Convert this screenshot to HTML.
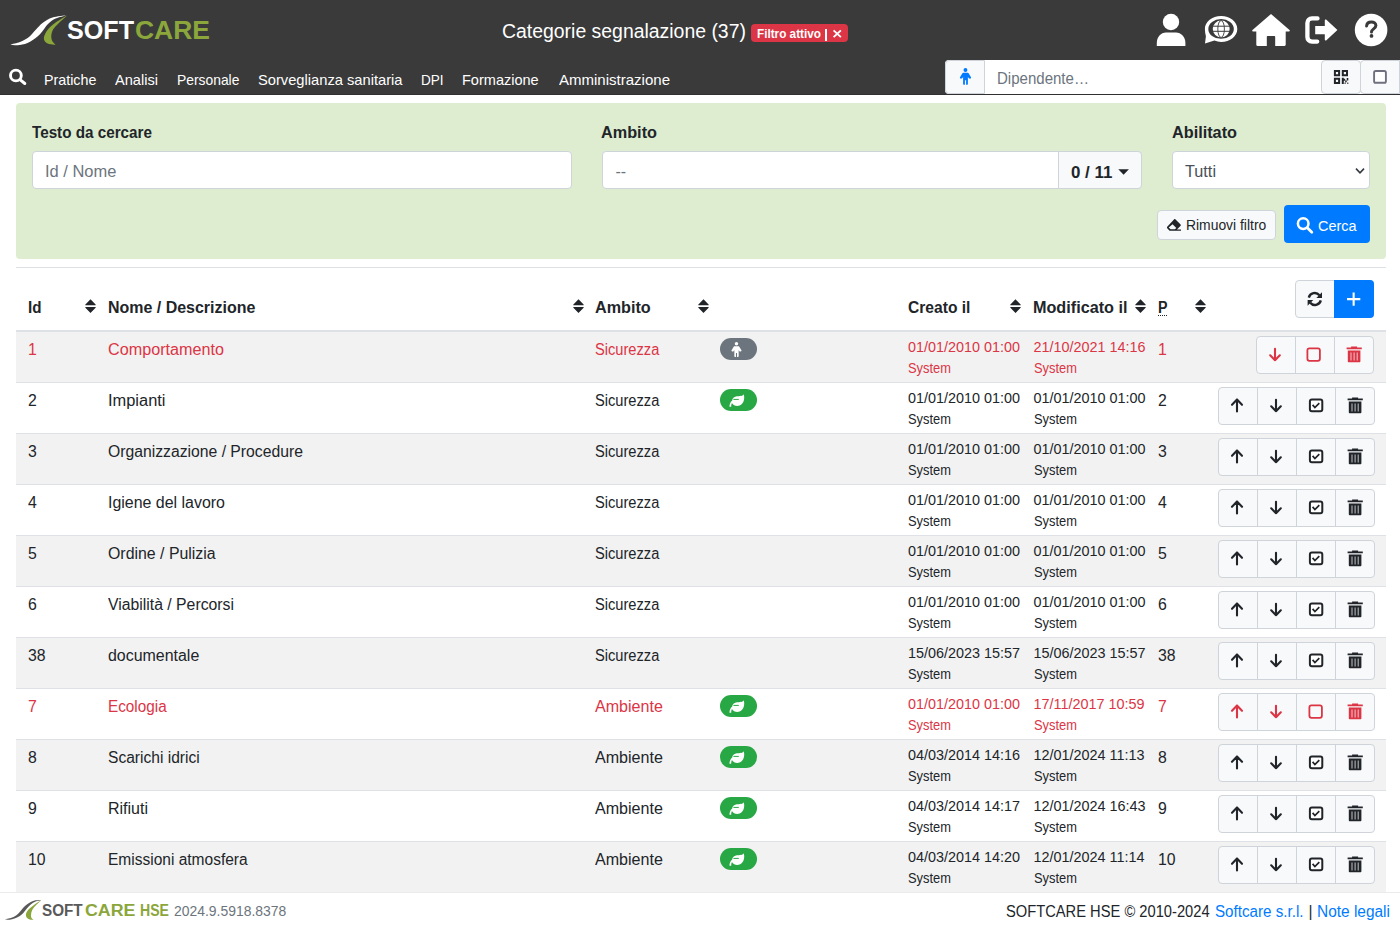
<!DOCTYPE html>
<html><head><meta charset="utf-8"><title>Categorie segnalazione</title>
<style>
html,body{margin:0;padding:0;width:1400px;height:927px;overflow:hidden;background:#fff;}
body{position:relative;font-family:"Liberation Sans", sans-serif;}
.t{position:absolute;white-space:nowrap;line-height:1;}
svg{overflow:visible;}
</style></head><body>
<div style="position:absolute;left:0px;top:0px;width:1400px;height:95px;background:#3a3a3a;"></div>
<div style="position:absolute;left:0px;top:94px;width:1400px;height:1px;background:#303030;"></div>
<svg style="position:absolute;left:0px;top:0px;" width="80" height="60" viewBox="0 0 80 60"><path d="M10.50 44.50 C12.08 44.08 16.92 43.25 20.00 42.00 C23.08 40.75 26.33 39.08 29.00 37.00 C31.67 34.92 33.75 31.83 36.00 29.50 C38.25 27.17 39.75 25.00 42.50 23.00 C45.25 21.00 48.42 18.79 52.50 17.50 C56.58 16.21 64.58 15.62 67.00 15.25 L67.00 15.25 C65.00 15.83 58.25 17.21 55.00 18.75 C51.75 20.29 49.50 22.54 47.50 24.50 C45.50 26.46 44.67 28.50 43.00 30.50 C41.33 32.50 40.08 34.42 37.50 36.50 C34.92 38.58 30.83 41.54 27.50 43.00 C24.17 44.46 20.33 45.00 17.50 45.25 C14.67 45.50 11.67 44.62 10.50 44.50 Z" fill="#fff"/><path d="M67.00 15.50 C65.00 16.75 58.25 20.58 55.00 23.00 C51.75 25.42 49.33 27.67 47.50 30.00 C45.67 32.33 44.42 35.08 44.00 37.00 C43.58 38.92 44.17 40.33 45.00 41.50 C45.83 42.67 47.25 43.46 49.00 44.00 C50.75 44.54 54.42 44.62 55.50 44.75 L55.50 44.75 C54.92 44.04 52.67 42.29 52.00 40.50 C51.33 38.71 51.00 36.25 51.50 34.00 C52.00 31.75 52.42 30.08 55.00 27.00 C57.58 23.92 65.00 17.42 67.00 15.50 Z" fill="#8ba63b"/></svg>
<div class="t" style="left:67.4px;top:18.41px;font-size:25.5px;color:#fff;font-weight:700;transform:scaleX(0.9853);transform-origin:0 0;">SOFT</div>
<div class="t" style="left:135.4px;top:18.41px;font-size:25.5px;color:#8ba63b;font-weight:700;transform:scaleX(1.0380);transform-origin:0 0;">CARE</div>
<div class="t" style="left:502.4px;top:22.01px;font-size:19.6px;color:#fff;transform:scaleX(0.9909);transform-origin:0 0;">Categorie segnalazione (37)</div>
<div style="position:absolute;left:751px;top:24px;width:97px;height:18px;background:#dc3545;border-radius:4px;"></div>
<div class="t" style="left:756.8px;top:27.90px;font-size:12.4px;color:#fff;font-weight:700;transform:scaleX(0.9480);transform-origin:0 0;">Filtro attivo</div>
<div style="position:absolute;left:825.4px;top:29.3px;width:1.3px;height:11.3px;background:#fff;"></div>
<svg style="position:absolute;left:830px;top:27px;" width="14" height="14" viewBox="830 27 14 14"><path d="M833.6 30.4 L840.9 37.1 M840.9 30.4 L833.6 37.1" stroke="#fff" stroke-width="1.9"/></svg>
<svg style="position:absolute;left:1150px;top:8px;" width="45" height="44" viewBox="1150 8 45 44"><circle cx="1171" cy="22" r="8.2" fill="#fff"/><path d="M1156.8 45.9 L1156.8 43 C1156.8 37 1161 32.6 1166 32.6 L1176 32.6 C1181 32.6 1185.4 37 1185.4 43 L1185.4 45.9 Z" fill="#fff"/></svg>
<svg style="position:absolute;left:1195px;top:8px;" width="50" height="44" viewBox="1195 8 50 44"><path d="M1205 43.6 L1205.9 36.2 C1205.3 33.9 1204.9 31.5 1204.9 28.9 C1204.9 21.7 1212.1 15.9 1221.1 15.9 C1230.1 15.9 1237.3 21.7 1237.3 28.9 C1237.3 36.1 1230.1 41.9 1221.1 41.9 C1218.8 41.9 1216.5 41.5 1214.4 40.6 Z" fill="#fff"/><ellipse cx="1221.05" cy="28.9" rx="12.75" ry="9.9" fill="#3a3a3a"/><circle cx="1221.2" cy="29" r="8.45" fill="#fff"/><path d="M1212.5 26.2 H1230 M1212.5 31.3 H1230" stroke="#3a3a3a" stroke-width="1"/><ellipse cx="1221.1" cy="29" rx="3.3" ry="8.45" fill="none" stroke="#3a3a3a" stroke-width="0.9"/></svg>
<svg style="position:absolute;left:1245px;top:8px;" width="50" height="44" viewBox="1245 8 50 44"><path d="M1271 13.9 L1289.5 30 C1290.2 30.8 1289.6 31.5 1288.6 31.5 L1285.7 31.5 L1285.7 44.8 C1285.7 45.5 1285.2 46 1284.5 46 L1275.2 46 L1275.2 37 C1275.2 36.3 1274.7 36 1274.2 36 L1267.8 36 C1267.3 36 1266.8 36.3 1266.8 37 L1266.8 46 L1257.5 46 C1256.8 46 1256.3 45.5 1256.3 44.8 L1256.3 31.5 L1253.4 31.5 C1252.4 31.5 1251.8 30.8 1252.5 30 Z" fill="#fff"/></svg>
<svg style="position:absolute;left:1300px;top:8px;" width="45" height="44" viewBox="1300 8 45 44"><path d="M1317.5 18.4 H1312 C1309.3 18.4 1307.4 20.3 1307.4 23 V37 C1307.4 39.7 1309.3 41.6 1312 41.6 H1317.2" fill="none" stroke="#fff" stroke-width="4.3" stroke-linecap="round"/><path d="M1315.2 26 H1324.8 V20.5 C1324.8 19.6 1325.8 19.2 1326.4 19.8 L1337.4 30 L1326.4 40.2 C1325.8 40.8 1324.8 40.4 1324.8 39.5 V34.3 H1315.2 Z" fill="#fff"/></svg>
<svg style="position:absolute;left:1350px;top:8px;" width="45" height="44" viewBox="1350 8 45 44"><circle cx="1371.1" cy="30" r="16.3" fill="#fff"/><path d="M1366.6 26 C1366.8 23.3 1368.8 21.9 1371.4 21.9 C1374 21.9 1375.9 23.5 1375.9 25.6 C1375.9 28.8 1371.5 29 1371.5 32" fill="none" stroke="#3a3a3a" stroke-width="3" stroke-linecap="round"/><circle cx="1371.5" cy="35.9" r="1.9" fill="#3a3a3a"/></svg>
<svg style="position:absolute;left:0px;top:60px;" width="35" height="35" viewBox="0 60 35 35"><circle cx="15.9" cy="75.5" r="5.4" fill="none" stroke="#fff" stroke-width="2.9"/><path d="M20 79.6 L24.8 83.5" stroke="#fff" stroke-width="3" stroke-linecap="round"/></svg>
<div class="t" style="left:44.2px;top:72.30px;font-size:15px;color:#fff;transform:scaleX(0.9522);transform-origin:0 0;">Pratiche</div>
<div class="t" style="left:115.3px;top:72.30px;font-size:15px;color:#fff;transform:scaleX(0.9731);transform-origin:0 0;">Analisi</div>
<div class="t" style="left:177.3px;top:72.30px;font-size:15px;color:#fff;transform:scaleX(0.9238);transform-origin:0 0;">Personale</div>
<div class="t" style="left:257.9px;top:72.30px;font-size:15px;color:#fff;transform:scaleX(0.9791);transform-origin:0 0;">Sorveglianza sanitaria</div>
<div class="t" style="left:421.3px;top:72.30px;font-size:15px;color:#fff;transform:scaleX(0.9038);transform-origin:0 0;">DPI</div>
<div class="t" style="left:462.4px;top:72.30px;font-size:15px;color:#fff;transform:scaleX(0.9684);transform-origin:0 0;">Formazione</div>
<div class="t" style="left:558.6px;top:72.30px;font-size:15px;color:#fff;transform:scaleX(1.0012);transform-origin:0 0;">Amministrazione</div>
<div style="position:absolute;left:945px;top:60px;width:455px;height:34px;background:#fff;border-radius:4px 0 0 4px;"></div>
<div style="position:absolute;left:945px;top:60px;width:39.5px;height:34px;background:#f8f9fa;border:1px solid #ced4da;border-radius:4px 0 0 4px;box-sizing:border-box;"></div>
<svg style="position:absolute;left:959.5px;top:68.3px;" width="12" height="17" viewBox="0 0 12 17"><g fill="#007bff"><circle cx="5.46" cy="2.0" r="1.95"/><path d="M3.3 4.7 H7.7 C8.1 4.7 8.4 4.9 8.6 5.2 L11 9.3 C11.3 9.9 10.9 10.6 10.2 10.6 H9 L7.9 8.9 V16 C7.9 16.4 7.6 16.7 7.2 16.7 H6.1 V12.2 H4.9 V16.7 H3.8 C3.4 16.7 3.1 16.4 3.1 16 V8.9 L2 10.6 H0.8 C0.1 10.6 -0.3 9.9 0 9.3 L2.4 5.2 C2.6 4.9 2.9 4.7 3.3 4.7 Z"/></g></svg>
<div class="t" style="left:997px;top:70.09px;font-size:16.2px;color:#6c757d;transform:scaleX(0.9286);transform-origin:0 0;">Dipendente…</div>
<div style="position:absolute;left:1320.5px;top:60px;width:40px;height:34px;background:#f8f9fa;border:1px solid #ced4da;border-radius:4px;box-sizing:border-box;"></div>
<div style="position:absolute;left:1360px;top:60px;width:40px;height:34px;background:#f8f9fa;border:1px solid #ced4da;border-radius:4px 0 0 4px;box-sizing:border-box;"></div>
<svg style="position:absolute;left:1330px;top:66px;" width="22" height="22" viewBox="1330 66 22 22"><path d="M1334.9 71 h4.2 v4.2 h-4.2 Z M1342.8 71 h4.2 v4.2 h-4.2 Z M1334.9 78.8 h4.2 v4.2 h-4.2 Z" fill="none" stroke="#212529" stroke-width="2"/><path d="M1341.8 77.8 h2 v6.2 h-2 Z M1343.8 78.8 h1.4 v2 h-1.4 Z M1345.2 80.4 h1.5 v1.8 h-1.5 Z M1346.7 78 h1.6 v2.4 h-1.6 Z M1344.6 82.6 h1 v1.3 h-1 Z M1347.3 82.6 h1 v1.3 h-1 Z" fill="#212529"/></svg>
<svg style="position:absolute;left:1370px;top:66px;" width="22" height="22" viewBox="1370 66 22 22"><rect x="1374.1" y="71" width="11.8" height="11.8" rx="1.6" fill="#fff" stroke="#6f6f80" stroke-width="1.9"/></svg>
<div style="position:absolute;left:16px;top:103px;width:1370px;height:155.5px;background:#deedcf;border-radius:4px;"></div>
<div class="t" style="left:32px;top:124.79px;font-size:15.6px;color:#212529;font-weight:700;transform:scaleX(0.9768);transform-origin:0 0;">Testo da cercare</div>
<div class="t" style="left:601.4px;top:125.29px;font-size:15.6px;color:#212529;font-weight:700;transform:scaleX(1.0423);transform-origin:0 0;">Ambito</div>
<div class="t" style="left:1171.7px;top:125.29px;font-size:15.6px;color:#212529;font-weight:700;transform:scaleX(1.0418);transform-origin:0 0;">Abilitato</div>
<div style="position:absolute;left:32px;top:151px;width:540px;height:38px;background:#fff;border:1px solid #ced4da;border-radius:4px;box-sizing:border-box;"></div>
<div class="t" style="left:45px;top:163.86px;font-size:16.0px;color:#6c757d;transform:scaleX(1.0294);transform-origin:0 0;">Id / Nome</div>
<div style="position:absolute;left:602px;top:151px;width:540px;height:38px;background:#fff;border:1px solid #ced4da;border-radius:4px;box-sizing:border-box;"></div>
<div style="position:absolute;left:1058px;top:151px;width:83.5px;height:38px;background:#f8f9fa;border:1px solid #ced4da;border-radius:0 4px 4px 0;box-sizing:border-box;"></div>
<div class="t" style="left:615.4px;top:163.56px;font-size:16px;color:#6c757d;">--</div>
<div class="t" style="left:1070.7px;top:163.89px;font-size:16.2px;color:#212529;font-weight:700;transform:scaleX(1.0444);transform-origin:0 0;">0 / 11</div>
<svg style="position:absolute;left:1115px;top:165px;" width="18" height="14" viewBox="1115 165 18 14"><path d="M1118.3 169.3 H1128.9 L1123.6 174.7 Z" fill="#212529"/></svg>
<div style="position:absolute;left:1172px;top:151px;width:198px;height:38px;background:#fff;border:1px solid #ced4da;border-radius:4px;box-sizing:border-box;"></div>
<div class="t" style="left:1185.4px;top:163.86px;font-size:16.0px;color:#495057;transform:scaleX(1.0156);transform-origin:0 0;">Tutti</div>
<svg style="position:absolute;left:1350px;top:162px;" width="20" height="18" viewBox="1350 162 20 18"><path d="M1356 168.6 L1360 172.8 L1364 168.6" fill="none" stroke="#343a40" stroke-width="1.6"/></svg>
<div style="position:absolute;left:1157px;top:209.5px;width:119px;height:30.5px;background:#f8f9fa;border:1px solid #ced4da;border-radius:4px;box-sizing:border-box;"></div>
<svg style="position:absolute;left:1163px;top:214px;" width="22" height="22" viewBox="1163 214 22 22"><path d="M1175.3 219.2 L1180.6 224.4 C1181 224.8 1181 225.4 1180.6 225.8 L1177 229.4 H1181 V230.8 H1170.3 C1169.9 230.8 1169.6 230.6 1169.3 230.4 L1167.2 228.3 C1166.8 227.9 1166.8 227.2 1167.2 226.8 L1174.2 219.2 C1174.5 218.9 1175 218.9 1175.3 219.2 Z" fill="#212529"/><path d="M1172.6 224.3 L1176.3 227.9 L1174.8 229.3 H1170.6 L1168.7 227.5 Z" fill="#f8f9fa"/></svg>
<div class="t" style="left:1186.3px;top:217.98px;font-size:14.2px;color:#212529;transform:scaleX(0.9785);transform-origin:0 0;">Rimuovi filtro</div>
<div style="position:absolute;left:1284px;top:205px;width:86px;height:38px;background:#007bff;border-radius:4px;"></div>
<svg style="position:absolute;left:1292px;top:212px;" width="25" height="25" viewBox="1292 212 25 25"><circle cx="1303.2" cy="223.6" r="5.3" fill="none" stroke="#fff" stroke-width="2.5"/><path d="M1307.3 227.7 L1311.8 232.2" stroke="#fff" stroke-width="2.8" stroke-linecap="round"/></svg>
<div class="t" style="left:1317.7px;top:217.96px;font-size:15.4px;color:#fff;transform:scaleX(0.9372);transform-origin:0 0;">Cerca</div>
<div style="position:absolute;left:16px;top:267px;width:1370px;height:1px;background:#dee2e6;"></div>
<div class="t" style="left:28.4px;top:299.49px;font-size:16.2px;color:#212529;font-weight:700;transform:scaleX(0.9377);transform-origin:0 0;">Id</div>
<svg style="position:absolute;left:85.2px;top:299px;" width="11" height="14.3" viewBox="0 0 11 14.3"><path d="M5.5 0.3 L10.6 5.6 C10.9 6 10.7 6.3 10.3 6.3 H0.7 C0.3 6.3 0.1 6 0.4 5.6 Z M5.5 14 L10.6 8.7 C10.9 8.3 10.7 8 10.3 8 H0.7 C0.3 8 0.1 8.3 0.4 8.7 Z" fill="#212529"/></svg>
<div class="t" style="left:108.2px;top:299.66px;font-size:16.0px;color:#212529;font-weight:700;transform:scaleX(0.9980);transform-origin:0 0;">Nome / Descrizione</div>
<svg style="position:absolute;left:572.9px;top:299px;" width="11" height="14.3" viewBox="0 0 11 14.3"><path d="M5.5 0.3 L10.6 5.6 C10.9 6 10.7 6.3 10.3 6.3 H0.7 C0.3 6.3 0.1 6 0.4 5.6 Z M5.5 14 L10.6 8.7 C10.9 8.3 10.7 8 10.3 8 H0.7 C0.3 8 0.1 8.3 0.4 8.7 Z" fill="#212529"/></svg>
<div class="t" style="left:595px;top:299.66px;font-size:16.0px;color:#212529;font-weight:700;transform:scaleX(1.0108);transform-origin:0 0;">Ambito</div>
<svg style="position:absolute;left:697.9px;top:299px;" width="11" height="14.3" viewBox="0 0 11 14.3"><path d="M5.5 0.3 L10.6 5.6 C10.9 6 10.7 6.3 10.3 6.3 H0.7 C0.3 6.3 0.1 6 0.4 5.6 Z M5.5 14 L10.6 8.7 C10.9 8.3 10.7 8 10.3 8 H0.7 C0.3 8 0.1 8.3 0.4 8.7 Z" fill="#212529"/></svg>
<div class="t" style="left:907.6px;top:299.66px;font-size:16.0px;color:#212529;font-weight:700;transform:scaleX(0.9748);transform-origin:0 0;">Creato il</div>
<svg style="position:absolute;left:1010px;top:299px;" width="11" height="14.3" viewBox="0 0 11 14.3"><path d="M5.5 0.3 L10.6 5.6 C10.9 6 10.7 6.3 10.3 6.3 H0.7 C0.3 6.3 0.1 6 0.4 5.6 Z M5.5 14 L10.6 8.7 C10.9 8.3 10.7 8 10.3 8 H0.7 C0.3 8 0.1 8.3 0.4 8.7 Z" fill="#212529"/></svg>
<div class="t" style="left:1033.3px;top:299.66px;font-size:16.0px;color:#212529;font-weight:700;transform:scaleX(1.0115);transform-origin:0 0;">Modificato il</div>
<svg style="position:absolute;left:1135px;top:299px;" width="11" height="14.3" viewBox="0 0 11 14.3"><path d="M5.5 0.3 L10.6 5.6 C10.9 6 10.7 6.3 10.3 6.3 H0.7 C0.3 6.3 0.1 6 0.4 5.6 Z M5.5 14 L10.6 8.7 C10.9 8.3 10.7 8 10.3 8 H0.7 C0.3 8 0.1 8.3 0.4 8.7 Z" fill="#212529"/></svg>
<div class="t" style="left:1157.9px;top:299.66px;font-size:16.0px;color:#212529;font-weight:700;transform:scaleX(0.8901);transform-origin:0 0;">P</div>
<div style="position:absolute;left:1158px;top:314.5px;width:9.5px;height:1px;background:repeating-linear-gradient(90deg,#212529 0 1px,transparent 1px 2px);"></div>
<svg style="position:absolute;left:1194.8px;top:299px;" width="11" height="14.3" viewBox="0 0 11 14.3"><path d="M5.5 0.3 L10.6 5.6 C10.9 6 10.7 6.3 10.3 6.3 H0.7 C0.3 6.3 0.1 6 0.4 5.6 Z M5.5 14 L10.6 8.7 C10.9 8.3 10.7 8 10.3 8 H0.7 C0.3 8 0.1 8.3 0.4 8.7 Z" fill="#212529"/></svg>
<div style="position:absolute;left:1295px;top:280px;width:79px;height:38px;background:#f8f9fa;border:1px solid #ced4da;border-radius:4px;box-sizing:border-box;"></div>
<div style="position:absolute;left:1334px;top:280px;width:40px;height:38px;background:#007bff;border-radius:0 4px 4px 0;"></div>
<svg style="position:absolute;left:1304px;top:289px;" width="22" height="20" viewBox="1304 289 22 20"><path d="M1308.8 297.6 A6.1 6.1 0 0 1 1319.4 295.2" fill="none" stroke="#212529" stroke-width="2.4"/><path d="M1322 292.2 V297.9 H1316.3 Z" fill="#212529"/><path d="M1320.8 300.4 A6.1 6.1 0 0 1 1310.2 302.8" fill="none" stroke="#212529" stroke-width="2.4"/><path d="M1307.6 305.8 V300.1 H1313.3 Z" fill="#212529"/></svg>
<svg style="position:absolute;left:1340px;top:286px;" width="28" height="26" viewBox="1340 286 28 26"><path d="M1353.65 292.5 V305.8 M1347 299.15 H1360.3" stroke="#fff" stroke-width="2.1"/></svg>
<div style="position:absolute;left:16px;top:330px;width:1370px;height:2px;background:#dee2e6;"></div>
<div style="position:absolute;left:16px;top:332px;width:1370px;height:50px;background:#f2f2f2;"></div>
<div class="t" style="left:28.4px;top:341.79px;font-size:15.6px;color:#dc3545;transform:scaleX(1.0128);transform-origin:0 0;">1</div>
<div class="t" style="left:107.8px;top:341.79px;font-size:15.6px;color:#dc3545;transform:scaleX(1.0371);transform-origin:0 0;">Comportamento</div>
<div class="t" style="left:595.2px;top:341.63px;font-size:15.8px;color:#dc3545;transform:scaleX(0.9269);transform-origin:0 0;">Sicurezza</div>
<div style="position:absolute;left:720px;top:338px;width:37px;height:22px;background:#6c757d;border-radius:11px;"></div>
<svg style="position:absolute;left:731.4px;top:342.4px;overflow:visible;" width="11" height="15" viewBox="0 0 11 16.7"><g fill="#fff"><circle cx="5.46" cy="2.0" r="1.95"/><path d="M3.3 4.7 H7.7 C8.1 4.7 8.4 4.9 8.6 5.2 L11 9.3 C11.3 9.9 10.9 10.6 10.2 10.6 H9 L7.9 8.9 V16 C7.9 16.4 7.6 16.7 7.2 16.7 H6.1 V12.2 H4.9 V16.7 H3.8 C3.4 16.7 3.1 16.4 3.1 16 V8.9 L2 10.6 H0.8 C0.1 10.6 -0.3 9.9 0 9.3 L2.4 5.2 C2.6 4.9 2.9 4.7 3.3 4.7 Z"/></g></svg>
<div class="t" style="left:908px;top:339.81px;font-size:14.4px;color:#dc3545;">01/01/2010 01:00</div>
<div class="t" style="left:908px;top:360.81px;font-size:14.4px;color:#dc3545;transform:scaleX(0.8956);transform-origin:0 0;">System</div>
<div class="t" style="left:1033.5px;top:339.81px;font-size:14.4px;color:#dc3545;">21/10/2021 14:16</div>
<div class="t" style="left:1033.5px;top:360.81px;font-size:14.4px;color:#dc3545;transform:scaleX(0.8956);transform-origin:0 0;">System</div>
<div class="t" style="left:1158px;top:341.93px;font-size:15.8px;color:#dc3545;">1</div>
<div style="position:absolute;left:1256px;top:336px;width:118px;height:38px;background:#f8f9fa;border:1px solid #ced4da;border-radius:4px;box-sizing:border-box;"></div>
<div style="position:absolute;left:1295px;top:336px;width:1px;height:38px;background:#ced4da;"></div>
<div style="position:absolute;left:1334px;top:336px;width:1px;height:38px;background:#ced4da;"></div>
<svg style="position:absolute;left:1256.0px;top:336px;" width="39" height="38" viewBox="0 0 39 38"><path d="M19 12.7 V24.3 M14.2 19.3 L19 24.2 L23.8 19.3" fill="none" stroke="#dc3545" stroke-width="2.1" stroke-linecap="round" stroke-linejoin="round"/></svg>
<svg style="position:absolute;left:1295.3333333333333px;top:336px;" width="39" height="38" viewBox="0 0 39 38"><rect x="12.4" y="12.3" width="12.5" height="12.5" rx="2" fill="none" stroke="#dc3545" stroke-width="1.8"/></svg>
<svg style="position:absolute;left:1334.6666666666667px;top:336px;" width="39" height="38" viewBox="0 0 39 38"><path d="M11.6 11.4 H26.8 V13.3 H11.6 Z M16.1 10.4 H22.1 V11.6 H16.1 Z" fill="#dc3545"/><path d="M12.8 14.5 H25.4 V25.2 C25.4 25.8 24.9 26.3 24.3 26.3 H13.9 C13.3 26.3 12.8 25.8 12.8 25.2 Z" fill="#dc3545"/><path d="M16 16.5 V24.5 M19.1 16.5 V24.5 M22.2 16.5 V24.5" stroke="#f8f9fa" stroke-width="1" opacity="0.75"/></svg>
<div style="position:absolute;left:16px;top:382px;width:1370px;height:1px;background:#dee2e6;"></div>
<div class="t" style="left:28.4px;top:392.79px;font-size:15.6px;color:#212529;transform:scaleX(1.0128);transform-origin:0 0;">2</div>
<div class="t" style="left:107.8px;top:392.79px;font-size:15.6px;color:#212529;transform:scaleX(1.0526);transform-origin:0 0;">Impianti</div>
<div class="t" style="left:595.2px;top:392.63px;font-size:15.8px;color:#212529;transform:scaleX(0.9269);transform-origin:0 0;">Sicurezza</div>
<div style="position:absolute;left:720px;top:389px;width:37px;height:22px;background:#28a745;border-radius:11px;"></div>
<svg style="position:absolute;left:720px;top:389px;" width="37" height="22" viewBox="0 0 37 22"><path d="M23.7 5.2 C24.3 7 24.4 9 24 10.5 C23.4 14.5 20.5 16.9 17.3 16.9 C15 16.9 13 15.8 11.9 13.9 C11.4 15 11.1 16.4 11.2 17.8 L9.5 17.8 C9.4 15.5 10.3 13.3 12.2 11.6 C12.3 10.6 12.6 10 12.9 9.6 C14 8 15.5 7.3 17 7.2 C19.5 7.1 21 7 21.9 6.7 C22.7 6.4 23.3 5.9 23.7 5.2 Z" fill="#fff"/><path d="M13.4 10.4 H18.8" stroke="#28a745" stroke-width="1"/></svg>
<div class="t" style="left:908px;top:390.81px;font-size:14.4px;color:#212529;">01/01/2010 01:00</div>
<div class="t" style="left:908px;top:411.81px;font-size:14.4px;color:#212529;transform:scaleX(0.8956);transform-origin:0 0;">System</div>
<div class="t" style="left:1033.5px;top:390.81px;font-size:14.4px;color:#212529;">01/01/2010 01:00</div>
<div class="t" style="left:1033.5px;top:411.81px;font-size:14.4px;color:#212529;transform:scaleX(0.8956);transform-origin:0 0;">System</div>
<div class="t" style="left:1158px;top:392.93px;font-size:15.8px;color:#212529;">2</div>
<div style="position:absolute;left:1218px;top:387px;width:157px;height:38px;background:#f8f9fa;border:1px solid #ced4da;border-radius:4px;box-sizing:border-box;"></div>
<div style="position:absolute;left:1257px;top:387px;width:1px;height:38px;background:#ced4da;"></div>
<div style="position:absolute;left:1296px;top:387px;width:1px;height:38px;background:#ced4da;"></div>
<div style="position:absolute;left:1335px;top:387px;width:1px;height:38px;background:#ced4da;"></div>
<svg style="position:absolute;left:1218.0px;top:387px;" width="39" height="38" viewBox="0 0 39 38"><path d="M19 12.6 V24.4 M14 17.8 L19 12.6 L24 17.8" fill="none" stroke="#212529" stroke-width="2.1" stroke-linecap="round" stroke-linejoin="round"/></svg>
<svg style="position:absolute;left:1257.25px;top:387px;" width="39" height="38" viewBox="0 0 39 38"><path d="M19 12.7 V24.3 M14.2 19.3 L19 24.2 L23.8 19.3" fill="none" stroke="#212529" stroke-width="2.1" stroke-linecap="round" stroke-linejoin="round"/></svg>
<svg style="position:absolute;left:1296.5px;top:387px;" width="39" height="38" viewBox="0 0 39 38"><rect x="12.9" y="12.4" width="12.4" height="11.9" rx="2" fill="#fff" stroke="#212529" stroke-width="2"/><path d="M15.6 17.9 L17.9 20.6 L22.3 16.2" fill="none" stroke="#212529" stroke-width="1.7"/></svg>
<svg style="position:absolute;left:1335.75px;top:387px;" width="39" height="38" viewBox="0 0 39 38"><path d="M11.6 11.4 H26.8 V13.3 H11.6 Z M16.1 10.4 H22.1 V11.6 H16.1 Z" fill="#212529"/><path d="M12.8 14.5 H25.4 V25.2 C25.4 25.8 24.9 26.3 24.3 26.3 H13.9 C13.3 26.3 12.8 25.8 12.8 25.2 Z" fill="#212529"/><path d="M16 16.5 V24.5 M19.1 16.5 V24.5 M22.2 16.5 V24.5" stroke="#f8f9fa" stroke-width="1" opacity="0.75"/></svg>
<div style="position:absolute;left:16px;top:433px;width:1370px;height:51px;background:#f2f2f2;"></div>
<div style="position:absolute;left:16px;top:433px;width:1370px;height:1px;background:#dee2e6;"></div>
<div class="t" style="left:28.4px;top:443.79px;font-size:15.6px;color:#212529;transform:scaleX(1.0128);transform-origin:0 0;">3</div>
<div class="t" style="left:107.8px;top:443.79px;font-size:15.6px;color:#212529;transform:scaleX(1.0084);transform-origin:0 0;">Organizzazione / Procedure</div>
<div class="t" style="left:595.2px;top:443.63px;font-size:15.8px;color:#212529;transform:scaleX(0.9269);transform-origin:0 0;">Sicurezza</div>
<div class="t" style="left:908px;top:441.81px;font-size:14.4px;color:#212529;">01/01/2010 01:00</div>
<div class="t" style="left:908px;top:462.81px;font-size:14.4px;color:#212529;transform:scaleX(0.8956);transform-origin:0 0;">System</div>
<div class="t" style="left:1033.5px;top:441.81px;font-size:14.4px;color:#212529;">01/01/2010 01:00</div>
<div class="t" style="left:1033.5px;top:462.81px;font-size:14.4px;color:#212529;transform:scaleX(0.8956);transform-origin:0 0;">System</div>
<div class="t" style="left:1158px;top:443.93px;font-size:15.8px;color:#212529;">3</div>
<div style="position:absolute;left:1218px;top:438px;width:157px;height:38px;background:#f8f9fa;border:1px solid #ced4da;border-radius:4px;box-sizing:border-box;"></div>
<div style="position:absolute;left:1257px;top:438px;width:1px;height:38px;background:#ced4da;"></div>
<div style="position:absolute;left:1296px;top:438px;width:1px;height:38px;background:#ced4da;"></div>
<div style="position:absolute;left:1335px;top:438px;width:1px;height:38px;background:#ced4da;"></div>
<svg style="position:absolute;left:1218.0px;top:438px;" width="39" height="38" viewBox="0 0 39 38"><path d="M19 12.6 V24.4 M14 17.8 L19 12.6 L24 17.8" fill="none" stroke="#212529" stroke-width="2.1" stroke-linecap="round" stroke-linejoin="round"/></svg>
<svg style="position:absolute;left:1257.25px;top:438px;" width="39" height="38" viewBox="0 0 39 38"><path d="M19 12.7 V24.3 M14.2 19.3 L19 24.2 L23.8 19.3" fill="none" stroke="#212529" stroke-width="2.1" stroke-linecap="round" stroke-linejoin="round"/></svg>
<svg style="position:absolute;left:1296.5px;top:438px;" width="39" height="38" viewBox="0 0 39 38"><rect x="12.9" y="12.4" width="12.4" height="11.9" rx="2" fill="#fff" stroke="#212529" stroke-width="2"/><path d="M15.6 17.9 L17.9 20.6 L22.3 16.2" fill="none" stroke="#212529" stroke-width="1.7"/></svg>
<svg style="position:absolute;left:1335.75px;top:438px;" width="39" height="38" viewBox="0 0 39 38"><path d="M11.6 11.4 H26.8 V13.3 H11.6 Z M16.1 10.4 H22.1 V11.6 H16.1 Z" fill="#212529"/><path d="M12.8 14.5 H25.4 V25.2 C25.4 25.8 24.9 26.3 24.3 26.3 H13.9 C13.3 26.3 12.8 25.8 12.8 25.2 Z" fill="#212529"/><path d="M16 16.5 V24.5 M19.1 16.5 V24.5 M22.2 16.5 V24.5" stroke="#f8f9fa" stroke-width="1" opacity="0.75"/></svg>
<div style="position:absolute;left:16px;top:484px;width:1370px;height:1px;background:#dee2e6;"></div>
<div class="t" style="left:28.4px;top:494.79px;font-size:15.6px;color:#212529;transform:scaleX(1.0128);transform-origin:0 0;">4</div>
<div class="t" style="left:107.8px;top:494.79px;font-size:15.6px;color:#212529;transform:scaleX(1.0220);transform-origin:0 0;">Igiene del lavoro</div>
<div class="t" style="left:595.2px;top:494.63px;font-size:15.8px;color:#212529;transform:scaleX(0.9269);transform-origin:0 0;">Sicurezza</div>
<div class="t" style="left:908px;top:492.81px;font-size:14.4px;color:#212529;">01/01/2010 01:00</div>
<div class="t" style="left:908px;top:513.81px;font-size:14.4px;color:#212529;transform:scaleX(0.8956);transform-origin:0 0;">System</div>
<div class="t" style="left:1033.5px;top:492.81px;font-size:14.4px;color:#212529;">01/01/2010 01:00</div>
<div class="t" style="left:1033.5px;top:513.81px;font-size:14.4px;color:#212529;transform:scaleX(0.8956);transform-origin:0 0;">System</div>
<div class="t" style="left:1158px;top:494.93px;font-size:15.8px;color:#212529;">4</div>
<div style="position:absolute;left:1218px;top:489px;width:157px;height:38px;background:#f8f9fa;border:1px solid #ced4da;border-radius:4px;box-sizing:border-box;"></div>
<div style="position:absolute;left:1257px;top:489px;width:1px;height:38px;background:#ced4da;"></div>
<div style="position:absolute;left:1296px;top:489px;width:1px;height:38px;background:#ced4da;"></div>
<div style="position:absolute;left:1335px;top:489px;width:1px;height:38px;background:#ced4da;"></div>
<svg style="position:absolute;left:1218.0px;top:489px;" width="39" height="38" viewBox="0 0 39 38"><path d="M19 12.6 V24.4 M14 17.8 L19 12.6 L24 17.8" fill="none" stroke="#212529" stroke-width="2.1" stroke-linecap="round" stroke-linejoin="round"/></svg>
<svg style="position:absolute;left:1257.25px;top:489px;" width="39" height="38" viewBox="0 0 39 38"><path d="M19 12.7 V24.3 M14.2 19.3 L19 24.2 L23.8 19.3" fill="none" stroke="#212529" stroke-width="2.1" stroke-linecap="round" stroke-linejoin="round"/></svg>
<svg style="position:absolute;left:1296.5px;top:489px;" width="39" height="38" viewBox="0 0 39 38"><rect x="12.9" y="12.4" width="12.4" height="11.9" rx="2" fill="#fff" stroke="#212529" stroke-width="2"/><path d="M15.6 17.9 L17.9 20.6 L22.3 16.2" fill="none" stroke="#212529" stroke-width="1.7"/></svg>
<svg style="position:absolute;left:1335.75px;top:489px;" width="39" height="38" viewBox="0 0 39 38"><path d="M11.6 11.4 H26.8 V13.3 H11.6 Z M16.1 10.4 H22.1 V11.6 H16.1 Z" fill="#212529"/><path d="M12.8 14.5 H25.4 V25.2 C25.4 25.8 24.9 26.3 24.3 26.3 H13.9 C13.3 26.3 12.8 25.8 12.8 25.2 Z" fill="#212529"/><path d="M16 16.5 V24.5 M19.1 16.5 V24.5 M22.2 16.5 V24.5" stroke="#f8f9fa" stroke-width="1" opacity="0.75"/></svg>
<div style="position:absolute;left:16px;top:535px;width:1370px;height:51px;background:#f2f2f2;"></div>
<div style="position:absolute;left:16px;top:535px;width:1370px;height:1px;background:#dee2e6;"></div>
<div class="t" style="left:28.4px;top:545.79px;font-size:15.6px;color:#212529;transform:scaleX(1.0128);transform-origin:0 0;">5</div>
<div class="t" style="left:107.8px;top:545.79px;font-size:15.6px;color:#212529;transform:scaleX(1.0181);transform-origin:0 0;">Ordine / Pulizia</div>
<div class="t" style="left:595.2px;top:545.63px;font-size:15.8px;color:#212529;transform:scaleX(0.9269);transform-origin:0 0;">Sicurezza</div>
<div class="t" style="left:908px;top:543.81px;font-size:14.4px;color:#212529;">01/01/2010 01:00</div>
<div class="t" style="left:908px;top:564.81px;font-size:14.4px;color:#212529;transform:scaleX(0.8956);transform-origin:0 0;">System</div>
<div class="t" style="left:1033.5px;top:543.81px;font-size:14.4px;color:#212529;">01/01/2010 01:00</div>
<div class="t" style="left:1033.5px;top:564.81px;font-size:14.4px;color:#212529;transform:scaleX(0.8956);transform-origin:0 0;">System</div>
<div class="t" style="left:1158px;top:545.93px;font-size:15.8px;color:#212529;">5</div>
<div style="position:absolute;left:1218px;top:540px;width:157px;height:38px;background:#f8f9fa;border:1px solid #ced4da;border-radius:4px;box-sizing:border-box;"></div>
<div style="position:absolute;left:1257px;top:540px;width:1px;height:38px;background:#ced4da;"></div>
<div style="position:absolute;left:1296px;top:540px;width:1px;height:38px;background:#ced4da;"></div>
<div style="position:absolute;left:1335px;top:540px;width:1px;height:38px;background:#ced4da;"></div>
<svg style="position:absolute;left:1218.0px;top:540px;" width="39" height="38" viewBox="0 0 39 38"><path d="M19 12.6 V24.4 M14 17.8 L19 12.6 L24 17.8" fill="none" stroke="#212529" stroke-width="2.1" stroke-linecap="round" stroke-linejoin="round"/></svg>
<svg style="position:absolute;left:1257.25px;top:540px;" width="39" height="38" viewBox="0 0 39 38"><path d="M19 12.7 V24.3 M14.2 19.3 L19 24.2 L23.8 19.3" fill="none" stroke="#212529" stroke-width="2.1" stroke-linecap="round" stroke-linejoin="round"/></svg>
<svg style="position:absolute;left:1296.5px;top:540px;" width="39" height="38" viewBox="0 0 39 38"><rect x="12.9" y="12.4" width="12.4" height="11.9" rx="2" fill="#fff" stroke="#212529" stroke-width="2"/><path d="M15.6 17.9 L17.9 20.6 L22.3 16.2" fill="none" stroke="#212529" stroke-width="1.7"/></svg>
<svg style="position:absolute;left:1335.75px;top:540px;" width="39" height="38" viewBox="0 0 39 38"><path d="M11.6 11.4 H26.8 V13.3 H11.6 Z M16.1 10.4 H22.1 V11.6 H16.1 Z" fill="#212529"/><path d="M12.8 14.5 H25.4 V25.2 C25.4 25.8 24.9 26.3 24.3 26.3 H13.9 C13.3 26.3 12.8 25.8 12.8 25.2 Z" fill="#212529"/><path d="M16 16.5 V24.5 M19.1 16.5 V24.5 M22.2 16.5 V24.5" stroke="#f8f9fa" stroke-width="1" opacity="0.75"/></svg>
<div style="position:absolute;left:16px;top:586px;width:1370px;height:1px;background:#dee2e6;"></div>
<div class="t" style="left:28.4px;top:596.79px;font-size:15.6px;color:#212529;transform:scaleX(1.0128);transform-origin:0 0;">6</div>
<div class="t" style="left:107.8px;top:596.79px;font-size:15.6px;color:#212529;transform:scaleX(1.0115);transform-origin:0 0;">Viabilità / Percorsi</div>
<div class="t" style="left:595.2px;top:596.63px;font-size:15.8px;color:#212529;transform:scaleX(0.9269);transform-origin:0 0;">Sicurezza</div>
<div class="t" style="left:908px;top:594.81px;font-size:14.4px;color:#212529;">01/01/2010 01:00</div>
<div class="t" style="left:908px;top:615.81px;font-size:14.4px;color:#212529;transform:scaleX(0.8956);transform-origin:0 0;">System</div>
<div class="t" style="left:1033.5px;top:594.81px;font-size:14.4px;color:#212529;">01/01/2010 01:00</div>
<div class="t" style="left:1033.5px;top:615.81px;font-size:14.4px;color:#212529;transform:scaleX(0.8956);transform-origin:0 0;">System</div>
<div class="t" style="left:1158px;top:596.93px;font-size:15.8px;color:#212529;">6</div>
<div style="position:absolute;left:1218px;top:591px;width:157px;height:38px;background:#f8f9fa;border:1px solid #ced4da;border-radius:4px;box-sizing:border-box;"></div>
<div style="position:absolute;left:1257px;top:591px;width:1px;height:38px;background:#ced4da;"></div>
<div style="position:absolute;left:1296px;top:591px;width:1px;height:38px;background:#ced4da;"></div>
<div style="position:absolute;left:1335px;top:591px;width:1px;height:38px;background:#ced4da;"></div>
<svg style="position:absolute;left:1218.0px;top:591px;" width="39" height="38" viewBox="0 0 39 38"><path d="M19 12.6 V24.4 M14 17.8 L19 12.6 L24 17.8" fill="none" stroke="#212529" stroke-width="2.1" stroke-linecap="round" stroke-linejoin="round"/></svg>
<svg style="position:absolute;left:1257.25px;top:591px;" width="39" height="38" viewBox="0 0 39 38"><path d="M19 12.7 V24.3 M14.2 19.3 L19 24.2 L23.8 19.3" fill="none" stroke="#212529" stroke-width="2.1" stroke-linecap="round" stroke-linejoin="round"/></svg>
<svg style="position:absolute;left:1296.5px;top:591px;" width="39" height="38" viewBox="0 0 39 38"><rect x="12.9" y="12.4" width="12.4" height="11.9" rx="2" fill="#fff" stroke="#212529" stroke-width="2"/><path d="M15.6 17.9 L17.9 20.6 L22.3 16.2" fill="none" stroke="#212529" stroke-width="1.7"/></svg>
<svg style="position:absolute;left:1335.75px;top:591px;" width="39" height="38" viewBox="0 0 39 38"><path d="M11.6 11.4 H26.8 V13.3 H11.6 Z M16.1 10.4 H22.1 V11.6 H16.1 Z" fill="#212529"/><path d="M12.8 14.5 H25.4 V25.2 C25.4 25.8 24.9 26.3 24.3 26.3 H13.9 C13.3 26.3 12.8 25.8 12.8 25.2 Z" fill="#212529"/><path d="M16 16.5 V24.5 M19.1 16.5 V24.5 M22.2 16.5 V24.5" stroke="#f8f9fa" stroke-width="1" opacity="0.75"/></svg>
<div style="position:absolute;left:16px;top:637px;width:1370px;height:51px;background:#f2f2f2;"></div>
<div style="position:absolute;left:16px;top:637px;width:1370px;height:1px;background:#dee2e6;"></div>
<div class="t" style="left:28.4px;top:647.79px;font-size:15.6px;color:#212529;transform:scaleX(1.0128);transform-origin:0 0;">38</div>
<div class="t" style="left:107.8px;top:647.79px;font-size:15.6px;color:#212529;transform:scaleX(1.0221);transform-origin:0 0;">documentale</div>
<div class="t" style="left:595.2px;top:647.63px;font-size:15.8px;color:#212529;transform:scaleX(0.9269);transform-origin:0 0;">Sicurezza</div>
<div class="t" style="left:908px;top:645.81px;font-size:14.4px;color:#212529;">15/06/2023 15:57</div>
<div class="t" style="left:908px;top:666.81px;font-size:14.4px;color:#212529;transform:scaleX(0.8956);transform-origin:0 0;">System</div>
<div class="t" style="left:1033.5px;top:645.81px;font-size:14.4px;color:#212529;">15/06/2023 15:57</div>
<div class="t" style="left:1033.5px;top:666.81px;font-size:14.4px;color:#212529;transform:scaleX(0.8956);transform-origin:0 0;">System</div>
<div class="t" style="left:1158px;top:647.93px;font-size:15.8px;color:#212529;">38</div>
<div style="position:absolute;left:1218px;top:642px;width:157px;height:38px;background:#f8f9fa;border:1px solid #ced4da;border-radius:4px;box-sizing:border-box;"></div>
<div style="position:absolute;left:1257px;top:642px;width:1px;height:38px;background:#ced4da;"></div>
<div style="position:absolute;left:1296px;top:642px;width:1px;height:38px;background:#ced4da;"></div>
<div style="position:absolute;left:1335px;top:642px;width:1px;height:38px;background:#ced4da;"></div>
<svg style="position:absolute;left:1218.0px;top:642px;" width="39" height="38" viewBox="0 0 39 38"><path d="M19 12.6 V24.4 M14 17.8 L19 12.6 L24 17.8" fill="none" stroke="#212529" stroke-width="2.1" stroke-linecap="round" stroke-linejoin="round"/></svg>
<svg style="position:absolute;left:1257.25px;top:642px;" width="39" height="38" viewBox="0 0 39 38"><path d="M19 12.7 V24.3 M14.2 19.3 L19 24.2 L23.8 19.3" fill="none" stroke="#212529" stroke-width="2.1" stroke-linecap="round" stroke-linejoin="round"/></svg>
<svg style="position:absolute;left:1296.5px;top:642px;" width="39" height="38" viewBox="0 0 39 38"><rect x="12.9" y="12.4" width="12.4" height="11.9" rx="2" fill="#fff" stroke="#212529" stroke-width="2"/><path d="M15.6 17.9 L17.9 20.6 L22.3 16.2" fill="none" stroke="#212529" stroke-width="1.7"/></svg>
<svg style="position:absolute;left:1335.75px;top:642px;" width="39" height="38" viewBox="0 0 39 38"><path d="M11.6 11.4 H26.8 V13.3 H11.6 Z M16.1 10.4 H22.1 V11.6 H16.1 Z" fill="#212529"/><path d="M12.8 14.5 H25.4 V25.2 C25.4 25.8 24.9 26.3 24.3 26.3 H13.9 C13.3 26.3 12.8 25.8 12.8 25.2 Z" fill="#212529"/><path d="M16 16.5 V24.5 M19.1 16.5 V24.5 M22.2 16.5 V24.5" stroke="#f8f9fa" stroke-width="1" opacity="0.75"/></svg>
<div style="position:absolute;left:16px;top:688px;width:1370px;height:1px;background:#dee2e6;"></div>
<div class="t" style="left:28.4px;top:698.79px;font-size:15.6px;color:#dc3545;transform:scaleX(1.0128);transform-origin:0 0;">7</div>
<div class="t" style="left:107.8px;top:698.79px;font-size:15.6px;color:#dc3545;transform:scaleX(0.9809);transform-origin:0 0;">Ecologia</div>
<div class="t" style="left:595.2px;top:698.79px;font-size:15.6px;color:#dc3545;transform:scaleX(1.0302);transform-origin:0 0;">Ambiente</div>
<div style="position:absolute;left:720px;top:695px;width:37px;height:22px;background:#28a745;border-radius:11px;"></div>
<svg style="position:absolute;left:720px;top:695px;" width="37" height="22" viewBox="0 0 37 22"><path d="M23.7 5.2 C24.3 7 24.4 9 24 10.5 C23.4 14.5 20.5 16.9 17.3 16.9 C15 16.9 13 15.8 11.9 13.9 C11.4 15 11.1 16.4 11.2 17.8 L9.5 17.8 C9.4 15.5 10.3 13.3 12.2 11.6 C12.3 10.6 12.6 10 12.9 9.6 C14 8 15.5 7.3 17 7.2 C19.5 7.1 21 7 21.9 6.7 C22.7 6.4 23.3 5.9 23.7 5.2 Z" fill="#fff"/><path d="M13.4 10.4 H18.8" stroke="#28a745" stroke-width="1"/></svg>
<div class="t" style="left:908px;top:696.81px;font-size:14.4px;color:#dc3545;">01/01/2010 01:00</div>
<div class="t" style="left:908px;top:717.81px;font-size:14.4px;color:#dc3545;transform:scaleX(0.8956);transform-origin:0 0;">System</div>
<div class="t" style="left:1033.5px;top:696.81px;font-size:14.4px;color:#dc3545;">17/11/2017 10:59</div>
<div class="t" style="left:1033.5px;top:717.81px;font-size:14.4px;color:#dc3545;transform:scaleX(0.8956);transform-origin:0 0;">System</div>
<div class="t" style="left:1158px;top:698.93px;font-size:15.8px;color:#dc3545;">7</div>
<div style="position:absolute;left:1218px;top:693px;width:157px;height:38px;background:#f8f9fa;border:1px solid #ced4da;border-radius:4px;box-sizing:border-box;"></div>
<div style="position:absolute;left:1257px;top:693px;width:1px;height:38px;background:#ced4da;"></div>
<div style="position:absolute;left:1296px;top:693px;width:1px;height:38px;background:#ced4da;"></div>
<div style="position:absolute;left:1335px;top:693px;width:1px;height:38px;background:#ced4da;"></div>
<svg style="position:absolute;left:1218.0px;top:693px;" width="39" height="38" viewBox="0 0 39 38"><path d="M19 12.6 V24.4 M14 17.8 L19 12.6 L24 17.8" fill="none" stroke="#dc3545" stroke-width="2.1" stroke-linecap="round" stroke-linejoin="round"/></svg>
<svg style="position:absolute;left:1257.25px;top:693px;" width="39" height="38" viewBox="0 0 39 38"><path d="M19 12.7 V24.3 M14.2 19.3 L19 24.2 L23.8 19.3" fill="none" stroke="#dc3545" stroke-width="2.1" stroke-linecap="round" stroke-linejoin="round"/></svg>
<svg style="position:absolute;left:1296.5px;top:693px;" width="39" height="38" viewBox="0 0 39 38"><rect x="12.4" y="12.3" width="12.5" height="12.5" rx="2" fill="none" stroke="#dc3545" stroke-width="1.8"/></svg>
<svg style="position:absolute;left:1335.75px;top:693px;" width="39" height="38" viewBox="0 0 39 38"><path d="M11.6 11.4 H26.8 V13.3 H11.6 Z M16.1 10.4 H22.1 V11.6 H16.1 Z" fill="#dc3545"/><path d="M12.8 14.5 H25.4 V25.2 C25.4 25.8 24.9 26.3 24.3 26.3 H13.9 C13.3 26.3 12.8 25.8 12.8 25.2 Z" fill="#dc3545"/><path d="M16 16.5 V24.5 M19.1 16.5 V24.5 M22.2 16.5 V24.5" stroke="#f8f9fa" stroke-width="1" opacity="0.75"/></svg>
<div style="position:absolute;left:16px;top:739px;width:1370px;height:51px;background:#f2f2f2;"></div>
<div style="position:absolute;left:16px;top:739px;width:1370px;height:1px;background:#dee2e6;"></div>
<div class="t" style="left:28.4px;top:749.79px;font-size:15.6px;color:#212529;transform:scaleX(1.0128);transform-origin:0 0;">8</div>
<div class="t" style="left:107.8px;top:749.79px;font-size:15.6px;color:#212529;transform:scaleX(0.9990);transform-origin:0 0;">Scarichi idrici</div>
<div class="t" style="left:595.2px;top:749.79px;font-size:15.6px;color:#212529;transform:scaleX(1.0302);transform-origin:0 0;">Ambiente</div>
<div style="position:absolute;left:720px;top:746px;width:37px;height:22px;background:#28a745;border-radius:11px;"></div>
<svg style="position:absolute;left:720px;top:746px;" width="37" height="22" viewBox="0 0 37 22"><path d="M23.7 5.2 C24.3 7 24.4 9 24 10.5 C23.4 14.5 20.5 16.9 17.3 16.9 C15 16.9 13 15.8 11.9 13.9 C11.4 15 11.1 16.4 11.2 17.8 L9.5 17.8 C9.4 15.5 10.3 13.3 12.2 11.6 C12.3 10.6 12.6 10 12.9 9.6 C14 8 15.5 7.3 17 7.2 C19.5 7.1 21 7 21.9 6.7 C22.7 6.4 23.3 5.9 23.7 5.2 Z" fill="#fff"/><path d="M13.4 10.4 H18.8" stroke="#28a745" stroke-width="1"/></svg>
<div class="t" style="left:908px;top:747.81px;font-size:14.4px;color:#212529;">04/03/2014 14:16</div>
<div class="t" style="left:908px;top:768.81px;font-size:14.4px;color:#212529;transform:scaleX(0.8956);transform-origin:0 0;">System</div>
<div class="t" style="left:1033.5px;top:747.81px;font-size:14.4px;color:#212529;">12/01/2024 11:13</div>
<div class="t" style="left:1033.5px;top:768.81px;font-size:14.4px;color:#212529;transform:scaleX(0.8956);transform-origin:0 0;">System</div>
<div class="t" style="left:1158px;top:749.93px;font-size:15.8px;color:#212529;">8</div>
<div style="position:absolute;left:1218px;top:744px;width:157px;height:38px;background:#f8f9fa;border:1px solid #ced4da;border-radius:4px;box-sizing:border-box;"></div>
<div style="position:absolute;left:1257px;top:744px;width:1px;height:38px;background:#ced4da;"></div>
<div style="position:absolute;left:1296px;top:744px;width:1px;height:38px;background:#ced4da;"></div>
<div style="position:absolute;left:1335px;top:744px;width:1px;height:38px;background:#ced4da;"></div>
<svg style="position:absolute;left:1218.0px;top:744px;" width="39" height="38" viewBox="0 0 39 38"><path d="M19 12.6 V24.4 M14 17.8 L19 12.6 L24 17.8" fill="none" stroke="#212529" stroke-width="2.1" stroke-linecap="round" stroke-linejoin="round"/></svg>
<svg style="position:absolute;left:1257.25px;top:744px;" width="39" height="38" viewBox="0 0 39 38"><path d="M19 12.7 V24.3 M14.2 19.3 L19 24.2 L23.8 19.3" fill="none" stroke="#212529" stroke-width="2.1" stroke-linecap="round" stroke-linejoin="round"/></svg>
<svg style="position:absolute;left:1296.5px;top:744px;" width="39" height="38" viewBox="0 0 39 38"><rect x="12.9" y="12.4" width="12.4" height="11.9" rx="2" fill="#fff" stroke="#212529" stroke-width="2"/><path d="M15.6 17.9 L17.9 20.6 L22.3 16.2" fill="none" stroke="#212529" stroke-width="1.7"/></svg>
<svg style="position:absolute;left:1335.75px;top:744px;" width="39" height="38" viewBox="0 0 39 38"><path d="M11.6 11.4 H26.8 V13.3 H11.6 Z M16.1 10.4 H22.1 V11.6 H16.1 Z" fill="#212529"/><path d="M12.8 14.5 H25.4 V25.2 C25.4 25.8 24.9 26.3 24.3 26.3 H13.9 C13.3 26.3 12.8 25.8 12.8 25.2 Z" fill="#212529"/><path d="M16 16.5 V24.5 M19.1 16.5 V24.5 M22.2 16.5 V24.5" stroke="#f8f9fa" stroke-width="1" opacity="0.75"/></svg>
<div style="position:absolute;left:16px;top:790px;width:1370px;height:1px;background:#dee2e6;"></div>
<div class="t" style="left:28.4px;top:800.79px;font-size:15.6px;color:#212529;transform:scaleX(1.0128);transform-origin:0 0;">9</div>
<div class="t" style="left:107.8px;top:800.79px;font-size:15.6px;color:#212529;transform:scaleX(1.0254);transform-origin:0 0;">Rifiuti</div>
<div class="t" style="left:595.2px;top:800.79px;font-size:15.6px;color:#212529;transform:scaleX(1.0302);transform-origin:0 0;">Ambiente</div>
<div style="position:absolute;left:720px;top:797px;width:37px;height:22px;background:#28a745;border-radius:11px;"></div>
<svg style="position:absolute;left:720px;top:797px;" width="37" height="22" viewBox="0 0 37 22"><path d="M23.7 5.2 C24.3 7 24.4 9 24 10.5 C23.4 14.5 20.5 16.9 17.3 16.9 C15 16.9 13 15.8 11.9 13.9 C11.4 15 11.1 16.4 11.2 17.8 L9.5 17.8 C9.4 15.5 10.3 13.3 12.2 11.6 C12.3 10.6 12.6 10 12.9 9.6 C14 8 15.5 7.3 17 7.2 C19.5 7.1 21 7 21.9 6.7 C22.7 6.4 23.3 5.9 23.7 5.2 Z" fill="#fff"/><path d="M13.4 10.4 H18.8" stroke="#28a745" stroke-width="1"/></svg>
<div class="t" style="left:908px;top:798.81px;font-size:14.4px;color:#212529;">04/03/2014 14:17</div>
<div class="t" style="left:908px;top:819.81px;font-size:14.4px;color:#212529;transform:scaleX(0.8956);transform-origin:0 0;">System</div>
<div class="t" style="left:1033.5px;top:798.81px;font-size:14.4px;color:#212529;">12/01/2024 16:43</div>
<div class="t" style="left:1033.5px;top:819.81px;font-size:14.4px;color:#212529;transform:scaleX(0.8956);transform-origin:0 0;">System</div>
<div class="t" style="left:1158px;top:800.93px;font-size:15.8px;color:#212529;">9</div>
<div style="position:absolute;left:1218px;top:795px;width:157px;height:38px;background:#f8f9fa;border:1px solid #ced4da;border-radius:4px;box-sizing:border-box;"></div>
<div style="position:absolute;left:1257px;top:795px;width:1px;height:38px;background:#ced4da;"></div>
<div style="position:absolute;left:1296px;top:795px;width:1px;height:38px;background:#ced4da;"></div>
<div style="position:absolute;left:1335px;top:795px;width:1px;height:38px;background:#ced4da;"></div>
<svg style="position:absolute;left:1218.0px;top:795px;" width="39" height="38" viewBox="0 0 39 38"><path d="M19 12.6 V24.4 M14 17.8 L19 12.6 L24 17.8" fill="none" stroke="#212529" stroke-width="2.1" stroke-linecap="round" stroke-linejoin="round"/></svg>
<svg style="position:absolute;left:1257.25px;top:795px;" width="39" height="38" viewBox="0 0 39 38"><path d="M19 12.7 V24.3 M14.2 19.3 L19 24.2 L23.8 19.3" fill="none" stroke="#212529" stroke-width="2.1" stroke-linecap="round" stroke-linejoin="round"/></svg>
<svg style="position:absolute;left:1296.5px;top:795px;" width="39" height="38" viewBox="0 0 39 38"><rect x="12.9" y="12.4" width="12.4" height="11.9" rx="2" fill="#fff" stroke="#212529" stroke-width="2"/><path d="M15.6 17.9 L17.9 20.6 L22.3 16.2" fill="none" stroke="#212529" stroke-width="1.7"/></svg>
<svg style="position:absolute;left:1335.75px;top:795px;" width="39" height="38" viewBox="0 0 39 38"><path d="M11.6 11.4 H26.8 V13.3 H11.6 Z M16.1 10.4 H22.1 V11.6 H16.1 Z" fill="#212529"/><path d="M12.8 14.5 H25.4 V25.2 C25.4 25.8 24.9 26.3 24.3 26.3 H13.9 C13.3 26.3 12.8 25.8 12.8 25.2 Z" fill="#212529"/><path d="M16 16.5 V24.5 M19.1 16.5 V24.5 M22.2 16.5 V24.5" stroke="#f8f9fa" stroke-width="1" opacity="0.75"/></svg>
<div style="position:absolute;left:16px;top:841px;width:1370px;height:51px;background:#f2f2f2;"></div>
<div style="position:absolute;left:16px;top:841px;width:1370px;height:1px;background:#dee2e6;"></div>
<div class="t" style="left:28.4px;top:851.79px;font-size:15.6px;color:#212529;transform:scaleX(1.0128);transform-origin:0 0;">10</div>
<div class="t" style="left:107.8px;top:851.79px;font-size:15.6px;color:#212529;transform:scaleX(0.9947);transform-origin:0 0;">Emissioni atmosfera</div>
<div class="t" style="left:595.2px;top:851.79px;font-size:15.6px;color:#212529;transform:scaleX(1.0302);transform-origin:0 0;">Ambiente</div>
<div style="position:absolute;left:720px;top:848px;width:37px;height:22px;background:#28a745;border-radius:11px;"></div>
<svg style="position:absolute;left:720px;top:848px;" width="37" height="22" viewBox="0 0 37 22"><path d="M23.7 5.2 C24.3 7 24.4 9 24 10.5 C23.4 14.5 20.5 16.9 17.3 16.9 C15 16.9 13 15.8 11.9 13.9 C11.4 15 11.1 16.4 11.2 17.8 L9.5 17.8 C9.4 15.5 10.3 13.3 12.2 11.6 C12.3 10.6 12.6 10 12.9 9.6 C14 8 15.5 7.3 17 7.2 C19.5 7.1 21 7 21.9 6.7 C22.7 6.4 23.3 5.9 23.7 5.2 Z" fill="#fff"/><path d="M13.4 10.4 H18.8" stroke="#28a745" stroke-width="1"/></svg>
<div class="t" style="left:908px;top:849.81px;font-size:14.4px;color:#212529;">04/03/2014 14:20</div>
<div class="t" style="left:908px;top:870.81px;font-size:14.4px;color:#212529;transform:scaleX(0.8956);transform-origin:0 0;">System</div>
<div class="t" style="left:1033.5px;top:849.81px;font-size:14.4px;color:#212529;">12/01/2024 11:14</div>
<div class="t" style="left:1033.5px;top:870.81px;font-size:14.4px;color:#212529;transform:scaleX(0.8956);transform-origin:0 0;">System</div>
<div class="t" style="left:1158px;top:851.93px;font-size:15.8px;color:#212529;">10</div>
<div style="position:absolute;left:1218px;top:846px;width:157px;height:38px;background:#f8f9fa;border:1px solid #ced4da;border-radius:4px;box-sizing:border-box;"></div>
<div style="position:absolute;left:1257px;top:846px;width:1px;height:38px;background:#ced4da;"></div>
<div style="position:absolute;left:1296px;top:846px;width:1px;height:38px;background:#ced4da;"></div>
<div style="position:absolute;left:1335px;top:846px;width:1px;height:38px;background:#ced4da;"></div>
<svg style="position:absolute;left:1218.0px;top:846px;" width="39" height="38" viewBox="0 0 39 38"><path d="M19 12.6 V24.4 M14 17.8 L19 12.6 L24 17.8" fill="none" stroke="#212529" stroke-width="2.1" stroke-linecap="round" stroke-linejoin="round"/></svg>
<svg style="position:absolute;left:1257.25px;top:846px;" width="39" height="38" viewBox="0 0 39 38"><path d="M19 12.7 V24.3 M14.2 19.3 L19 24.2 L23.8 19.3" fill="none" stroke="#212529" stroke-width="2.1" stroke-linecap="round" stroke-linejoin="round"/></svg>
<svg style="position:absolute;left:1296.5px;top:846px;" width="39" height="38" viewBox="0 0 39 38"><rect x="12.9" y="12.4" width="12.4" height="11.9" rx="2" fill="#fff" stroke="#212529" stroke-width="2"/><path d="M15.6 17.9 L17.9 20.6 L22.3 16.2" fill="none" stroke="#212529" stroke-width="1.7"/></svg>
<svg style="position:absolute;left:1335.75px;top:846px;" width="39" height="38" viewBox="0 0 39 38"><path d="M11.6 11.4 H26.8 V13.3 H11.6 Z M16.1 10.4 H22.1 V11.6 H16.1 Z" fill="#212529"/><path d="M12.8 14.5 H25.4 V25.2 C25.4 25.8 24.9 26.3 24.3 26.3 H13.9 C13.3 26.3 12.8 25.8 12.8 25.2 Z" fill="#212529"/><path d="M16 16.5 V24.5 M19.1 16.5 V24.5 M22.2 16.5 V24.5" stroke="#f8f9fa" stroke-width="1" opacity="0.75"/></svg>
<div style="position:absolute;left:0px;top:892px;width:1400px;height:35px;background:#fff;"></div>
<div style="position:absolute;left:0px;top:892px;width:1400px;height:1px;background:#ebebeb;"></div>
<svg style="position:absolute;left:0px;top:893px;" width="45" height="30" viewBox="0 893 45 30"><path d="M4.85 919.43 C6.20 919.08 10.79 918.22 12.94 917.33 C15.10 916.44 16.29 915.44 17.80 914.09 C19.31 912.75 20.66 910.70 22.01 909.24 C23.35 907.78 24.43 906.54 25.89 905.36 C27.35 904.17 29.13 902.96 30.74 902.12 C32.36 901.28 33.87 900.69 35.60 900.34 C37.32 899.99 40.18 900.07 41.10 900.02 L41.10 900.18 C40.18 900.39 37.32 900.77 35.60 901.47 C33.87 902.17 32.20 903.20 30.74 904.39 C29.29 905.57 28.10 907.14 26.86 908.59 C25.62 910.05 24.54 911.83 23.30 913.12 C22.06 914.42 20.87 915.44 19.42 916.36 C17.96 917.28 16.18 918.06 14.56 918.62 C12.94 919.19 11.33 919.60 9.71 919.76 C8.09 919.92 5.66 919.62 4.85 919.60 Z" fill="#595959"/><path d="M41.10 900.18 C40.18 900.77 37.32 902.50 35.60 903.74 C33.87 904.98 32.15 906.38 30.74 907.62 C29.34 908.86 27.99 910.05 27.18 911.18 C26.38 912.31 25.94 913.34 25.89 914.42 C25.84 915.50 26.21 916.82 26.86 917.65 C27.51 918.49 28.64 919.08 29.77 919.43 C30.91 919.78 33.01 919.70 33.66 919.76 L33.66 919.76 C33.28 919.41 31.82 918.54 31.39 917.65 C30.96 916.76 30.96 915.60 31.07 914.42 C31.18 913.23 31.39 911.88 32.04 910.53 C32.69 909.19 33.44 908.05 34.95 906.33 C36.46 904.60 40.08 901.20 41.10 900.18 Z" fill="#8ba63b"/></svg>
<div class="t" style="left:41.8px;top:902.73px;font-size:15.8px;color:#595959;font-weight:700;transform:scaleX(0.9660);transform-origin:0 0;">SOFT</div>
<div class="t" style="left:84.6px;top:902.73px;font-size:15.8px;color:#8ba63b;font-weight:700;transform:scaleX(1.1257);transform-origin:0 0;">CARE</div>
<div class="t" style="left:140.3px;top:902.73px;font-size:15.8px;color:#8ba63b;font-weight:700;transform:scaleX(0.8926);transform-origin:0 0;">HSE</div>
<div class="t" style="left:173.6px;top:903.98px;font-size:14.2px;color:#6c757d;transform:scaleX(0.9816);transform-origin:0 0;">2024.9.5918.8378</div>
<div class="t" style="left:1006.3px;top:904.29px;font-size:15.6px;color:#212529;transform:scaleX(0.9425);transform-origin:0 0;">SOFTCARE HSE © 2010-2024</div>
<div class="t" style="left:1214.9px;top:904.29px;font-size:15.6px;color:#007bff;transform:scaleX(0.9722);transform-origin:0 0;">Softcare s.r.l.</div>
<div class="t" style="left:1308.5px;top:904.29px;font-size:15.6px;color:#212529;">|</div>
<div class="t" style="left:1317px;top:904.29px;font-size:15.6px;color:#007bff;transform:scaleX(0.9903);transform-origin:0 0;">Note legali</div>
</body></html>
